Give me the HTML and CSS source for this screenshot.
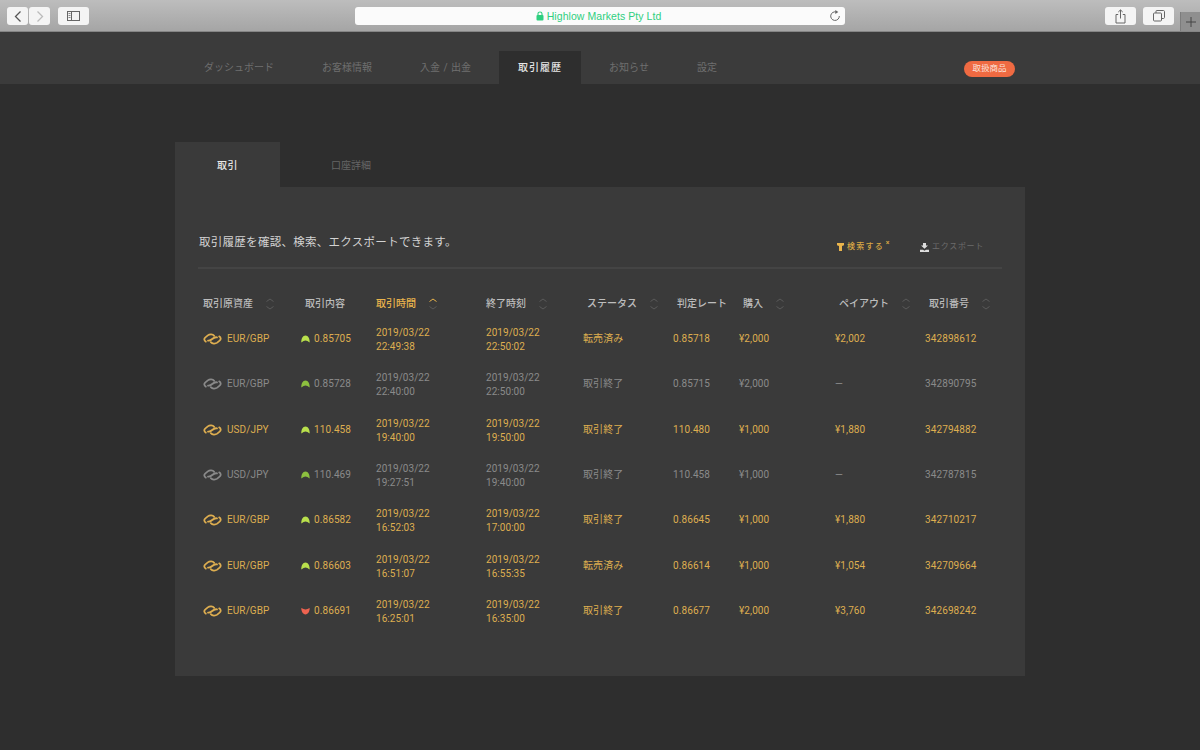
FILE: index.html
```html
<!DOCTYPE html>
<html lang="ja">
<head>
<meta charset="utf-8">
<title>Highlow Markets</title>
<link rel="stylesheet" href="styles.css">
</head>
<body>
<svg class="defs" width="0" height="0" aria-hidden="true">
  <symbol id="pair" viewBox="0 0 19 12"><g fill="none" stroke="currentColor" stroke-width="1.8" stroke-linecap="round"><path d="M2.8 8.6C.8 7.6 .9 5.6 2.4 4.4L4.8 2.4C6.8 .9 9.8 1.2 11.2 2.8"/><path d="M16.2 3.4C18.2 4.4 18.1 6.4 16.6 7.6L14.2 9.6C12.2 11.1 9.2 10.8 7.8 9.2"/><path d="M5 7.6C6.8 8 7.8 7.2 9.2 6C10.6 4.8 12.2 3.9 14 4.4"/></g></symbol>
  <symbol id="up" viewBox="0 0 9 8"><path d="M0.3 7.4C0.2 3.8 1.8 0.6 4.5 0.6S8.8 3.8 8.7 7.4L6.4 6L4.5 5.4L2.6 6Z" fill="currentColor"/></symbol>
  <symbol id="down" viewBox="0 0 9 8"><path d="M0.3 1L2.6 2L4.5 2.6L6.4 2L8.7 1C8.8 4.2 7 7.4 4.5 7.4S0.2 4.2 0.3 1Z" fill="currentColor"/></symbol>
  <symbol id="sort" viewBox="0 0 10 14"><path d="M1.5 4.5L5 2L8.5 4.5" fill="none" stroke="currentColor" stroke-width="1"/><path d="M1.5 9.5L5 12L8.5 9.5" fill="none" stroke="#5a5a5a" stroke-width="1"/></symbol>
</svg>

<header class="toolbar">
  <div class="tb-left">
    <div class="btn-pair">
      <span class="tb-btn nav-btn"><svg width="10" height="13" viewBox="0 0 10 13"><path d="M7.5 1.5L2.5 6.5L7.5 11.5" fill="none" stroke="#555" stroke-width="1.3"/></svg></span>
      <span class="tb-btn nav-btn"><svg width="10" height="13" viewBox="0 0 10 13"><path d="M2.5 1.5L7.5 6.5L2.5 11.5" fill="none" stroke="#bbb" stroke-width="1.3"/></svg></span>
    </div>
    <span class="tb-btn side-btn"><svg width="14" height="11" viewBox="0 0 14 11"><rect x="0.5" y="0.5" width="12" height="9" fill="none" stroke="#666"/><path d="M4.5 0.5V9.5" stroke="#666"/><path d="M1.5 2.5H3.5M1.5 4.5H3.5M1.5 6.5H3.5" stroke="#888"/></svg></span>
  </div>
  <div class="address">
    <svg class="lock" width="8" height="10" viewBox="0 0 8 10"><path d="M2 4V2.8C2 1.6 2.9 1 4 1S6 1.6 6 2.8V4" fill="none" stroke="#2fcf7f" stroke-width="1.1"/><rect x="0.5" y="4" width="7" height="5.5" rx="1" fill="#2fcf7f"/></svg>
    <span class="host">Highlow Markets Pty Ltd</span>
    <svg class="reload" width="12" height="12" viewBox="0 0 12 12"><path d="M7.5 2.1A4.3 4.3 0 1 0 10.3 6" fill="none" stroke="#666" stroke-width="1"/><path d="M6.3 0L9.3 2L6.3 4Z" fill="#666"/></svg>
  </div>
  <div class="tb-right">
    <span class="tb-btn right-btn"><svg width="11" height="15" viewBox="0 0 11 15"><path d="M3.2 5.5H1V14H10V5.5H7.8" fill="none" stroke="#666"/><path d="M5.5 9.5V1M3.3 3L5.5 .9L7.7 3" fill="none" stroke="#666"/></svg></span>
    <span class="tb-btn right-btn"><svg width="12" height="12" viewBox="0 0 12 12"><rect x="0.5" y="3" width="8" height="8" rx="1" fill="none" stroke="#666"/><path d="M3 3V1.2C3 .8 3.3 .5 3.7 .5H10.5C11 .5 11.5 1 11.5 1.5V7.5C11.5 8 11 8.5 10.5 8.5H8.5" fill="none" stroke="#666"/></svg></span>
    <span class="new-tab"><svg width="10" height="10" viewBox="0 0 10 10"><path d="M5 0V10M0 5H10" stroke="#444" stroke-width="1"/></svg></span>
  </div>
</header>

<nav class="mainnav">
  <ul class="nav-list">
    <li class="nav-item">ダッシュボード</li>
    <li class="nav-item">お客様情報</li>
    <li class="nav-item spaced">入金 / 出金</li>
    <li class="nav-item active">取引履歴</li>
    <li class="nav-item">お知らせ</li>
    <li class="nav-item">設定</li>
  </ul>
  <span class="pill">取扱商品</span>
</nav>

<main class="content">
  <div class="tabs">
    <div class="tab active">取引</div>
    <div class="tab wide">口座詳細</div>
  </div>
  <section class="panel">
    <div class="panel-head">
      <p class="intro">取引履歴を確認、検索、エクスポートできます。</p>
      <div class="actions">
        <span class="search"><svg width="7" height="8" viewBox="0 0 7 8"><path d="M0 0H7V2.2L5 3V8H2V3L0 2.2Z" fill="#e9b44c"/></svg>検索する<sup class="x">×</sup></span>
        <span class="export"><svg width="9" height="9" viewBox="0 0 9 9"><path d="M3 0H6V2.6H8L4.5 5.8L1 2.6H3Z M0 6.8H3L4.5 7.8L6 6.8H9V9H0Z" fill="#ddd"/></svg>エクスポート</span>
      </div>
    </div>
    <div class="grid head">
      <div class="th">取引原資産<svg class="si"><use href="#sort"/></svg></div>
      <div class="th pad">取引内容</div>
      <div class="th cur">取引時間<svg class="si"><use href="#sort"/></svg></div>
      <div class="th">終了時刻<svg class="si"><use href="#sort"/></svg></div>
      <div class="th pad">ステータス<svg class="si"><use href="#sort"/></svg></div>
      <div class="th pad">判定レート</div>
      <div class="th pad">購入<svg class="si"><use href="#sort"/></svg></div>
      <div class="th pad">ペイアウト<svg class="si"><use href="#sort"/></svg></div>
      <div class="th pad">取引番号<svg class="si"><use href="#sort"/></svg></div>
    </div>

    <div class="grid row gold">
      <div class="asset"><svg class="pair"><use href="#pair"/></svg>EUR/GBP</div>
      <div class="entry"><svg class="dir lime"><use href="#up"/></svg>0.85705</div>
      <div class="dt">2019/03/22<br>22:49:38</div><div class="dt">2019/03/22<br>22:50:02</div>
      <div>転売済み</div><div>0.85718</div><div>¥2,000</div><div>¥2,002</div><div>342898612</div>
    </div>
    <div class="grid row grey">
      <div class="asset"><svg class="pair"><use href="#pair"/></svg>EUR/GBP</div>
      <div class="entry"><svg class="dir green"><use href="#up"/></svg>0.85728</div>
      <div class="dt">2019/03/22<br>22:40:00</div><div class="dt">2019/03/22<br>22:50:00</div>
      <div>取引終了</div><div>0.85715</div><div>¥2,000</div><div>—</div><div>342890795</div>
    </div>
    <div class="grid row gold">
      <div class="asset"><svg class="pair"><use href="#pair"/></svg>USD/JPY</div>
      <div class="entry"><svg class="dir lime"><use href="#up"/></svg>110.458</div>
      <div class="dt">2019/03/22<br>19:40:00</div><div class="dt">2019/03/22<br>19:50:00</div>
      <div>取引終了</div><div>110.480</div><div>¥1,000</div><div>¥1,880</div><div>342794882</div>
    </div>
    <div class="grid row grey">
      <div class="asset"><svg class="pair"><use href="#pair"/></svg>USD/JPY</div>
      <div class="entry"><svg class="dir green"><use href="#up"/></svg>110.469</div>
      <div class="dt">2019/03/22<br>19:27:51</div><div class="dt">2019/03/22<br>19:40:00</div>
      <div>取引終了</div><div>110.458</div><div>¥1,000</div><div>—</div><div>342787815</div>
    </div>
    <div class="grid row gold">
      <div class="asset"><svg class="pair"><use href="#pair"/></svg>EUR/GBP</div>
      <div class="entry"><svg class="dir lime"><use href="#up"/></svg>0.86582</div>
      <div class="dt">2019/03/22<br>16:52:03</div><div class="dt">2019/03/22<br>17:00:00</div>
      <div>取引終了</div><div>0.86645</div><div>¥1,000</div><div>¥1,880</div><div>342710217</div>
    </div>
    <div class="grid row gold">
      <div class="asset"><svg class="pair"><use href="#pair"/></svg>EUR/GBP</div>
      <div class="entry"><svg class="dir lime"><use href="#up"/></svg>0.86603</div>
      <div class="dt">2019/03/22<br>16:51:07</div><div class="dt">2019/03/22<br>16:55:35</div>
      <div>転売済み</div><div>0.86614</div><div>¥1,000</div><div>¥1,054</div><div>342709664</div>
    </div>
    <div class="grid row gold">
      <div class="asset"><svg class="pair"><use href="#pair"/></svg>EUR/GBP</div>
      <div class="entry"><svg class="dir red"><use href="#down"/></svg>0.86691</div>
      <div class="dt">2019/03/22<br>16:25:01</div><div class="dt">2019/03/22<br>16:35:00</div>
      <div>取引終了</div><div>0.86677</div><div>¥2,000</div><div>¥3,760</div><div>342698242</div>
    </div>
  </section>
</main>
</body>
</html>
```
FILE: styles.css
```css
* { box-sizing: border-box; }
html, body { margin: 0; height: 100%; }
body {
  width: 1200px;
  height: 750px;
  overflow: hidden;
  background: #2e2e2e;
  font-family: Roboto, "Noto Sans CJK JP", sans-serif;
  color: #ccc;
}
.defs { display: block; height: 0; }

/* Browser toolbar */
.toolbar {
  height: 32px;
  display: flex;
  align-items: flex-start;
  position: relative;
  padding: 7px 0 0 7px;
  background: linear-gradient(#bdbdbd, #a6a6a6 96%);
  border-bottom: 1px solid #858585;
}
.tb-left { display: flex; gap: 8px; width: 348px; }
.btn-pair { display: flex; gap: 1px; }
.tb-btn {
  display: flex;
  align-items: center;
  justify-content: center;
  height: 18px;
  background: #f4f4f4;
  border-radius: 3px;
}
.nav-btn { width: 21px; }
.side-btn { width: 31px; }
.address {
  width: 490px;
  height: 18px;
  padding-right: 3px;
  background: #fbfbfb;
  border-radius: 3px;
  display: flex;
  align-items: center;
  justify-content: center;
  gap: 3px;
  position: relative;
  font-family: "Liberation Sans", Arial, sans-serif;
  font-size: 10.5px;
  letter-spacing: 0.06px;
}
.host { color: #2fcf7f; }
.reload { position: absolute; right: 4px; top: 3px; }
.tb-right { display: flex; gap: 7px; margin-left: 260px; }
.right-btn { width: 31px; }
.new-tab {
  position: absolute;
  right: 0;
  top: 12px;
  width: 20px;
  height: 19px;
  display: flex;
  align-items: center;
  justify-content: center;
  background: #8f8f8f;
  border-left: 1px solid #7c7c7c;
}

/* Site nav */
.mainnav {
  height: 52px;
  background: #3b3b3b;
  position: relative;
  display: flex;
  align-items: flex-end;
  padding-left: 180px;
}
.nav-list { display: flex; list-style: none; margin: 0; padding: 0; opacity: 0.999; }
.nav-item {
  height: 33px;
  padding: 0 24px;
  font-size: 10px;
  line-height: 34px;
  color: #6f6f6f;
}
.nav-item.spaced { word-spacing: 1px; }
.nav-item.active {
  background: #2e2e2e;
  color: #e6e6e6;
  font-weight: 500;
  margin: 0 4px;
  padding: 0 19px;
  letter-spacing: 1px;
}
.pill {
  position: absolute;
  left: 964px;
  top: 29px;
  width: 51px;
  height: 16px;
  border-radius: 8px;
  background: #ef6a42;
  color: #fbe3da;
  font-size: 8.5px;
  line-height: 15px;
  text-align: center;
}

/* Content */
.content { padding: 58px 175px 0; opacity: 0.999; }
.tabs { display: flex; height: 45px; }
.tab {
  width: 105px;
  text-align: center;
  font-size: 10px;
  line-height: 47px;
  color: #666;
}
.tab.wide { width: 142px; }
.tab.active { background: #3a3a3a; color: #e6e6e6; font-weight: 500; letter-spacing: 0.4px; }
.panel {
  height: 489px;
  background: #3a3a3a;
  padding: 0 23px;
}
.panel-head {
  height: 82px;
  display: flex;
  justify-content: space-between;
  border-bottom: 2px solid #444;
}
.intro {
  margin: 46px 0 0 1px;
  font-size: 11.5px;
  line-height: 18px;
  letter-spacing: 0.28px;
  color: #d2d2d2;
}
.actions {
  display: flex;
  margin: 53px 18px 0 0;
  font-size: 8px;
  line-height: 14px;
  letter-spacing: 1.2px;
  font-weight: 500;
}
.search { display: flex; align-items: center; gap: 3px; color: #d9a845; height: 14px; width: 83px; }
.x { font-size: 7px; line-height: 6px; align-self: flex-start; letter-spacing: 0; margin-left: -1px; }
.export { display: flex; align-items: center; gap: 3px; color: #6c6c6c; height: 14px; letter-spacing: 0.7px; font-weight: 400; }

.grid {
  display: grid;
  grid-template-columns: 98px 75px 110px 97px 90px 66px 96px 90px 77px;
  padding-left: 5px;
}
.head { margin: 25px 0 2.5px; height: 20px; align-items: center; }
.th {
  display: flex;
  align-items: center;
  font-size: 10px;
  line-height: 14px;
  color: #bdbdbd;
  font-weight: 500;
  white-space: nowrap;
}
.th.pad { padding-left: 4px; }
.th.cur { color: #e9b44c; }
.si { width: 10px; height: 14px; margin-left: 12px; color: #5a5a5a; flex: none; }
.cur .si { color: #e9b44c; }
.row {
  height: 45.33px;
  align-items: center;
  font-size: 10px;
  line-height: 16px;
  letter-spacing: 0.1px;
  white-space: nowrap;
}
.dt { line-height: 14px; padding-top: 2px; letter-spacing: 0.05px; }
.gold { color: #deae50; }
.grey { color: #8a8a8a; }
.asset, .entry { display: flex; align-items: center; }
.pair { width: 19px; height: 12px; margin-right: 5px; flex: none; }
.dir { width: 9px; height: 8px; margin-right: 4px; flex: none; }
.lime { color: #b9e04c; }
.green { color: #8cc03f; }
.red { color: #ee6350; }
```
